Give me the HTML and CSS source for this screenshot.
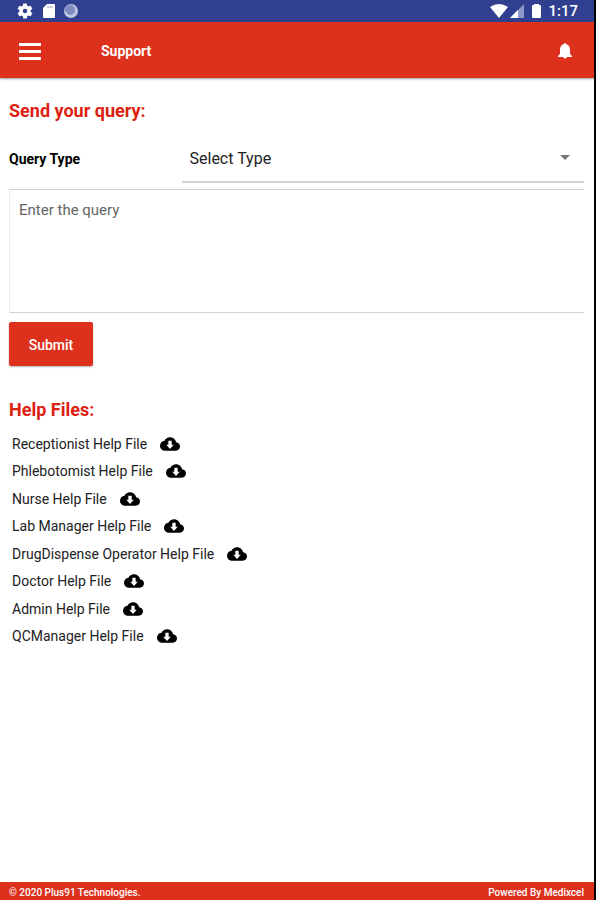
FILE: index.html
```
<!DOCTYPE html>
<html lang="en">
<head>
    <meta charset="UTF-8">
    <meta name="viewport" content="width=device-width, initial-scale=1.0">
    <title>Support</title>
    <link rel="stylesheet" href="styles.css">
</head>
<body>
    <!-- shared download icon -->
    <svg class="sprite" aria-hidden="true">
        <symbol id="cloud" viewBox="0 4 24 16">
            <path fill-rule="evenodd" d="M19.35 10.04C18.67 6.59 15.64 4 12 4 9.11 4 6.6 5.64 5.35 8.04 2.34 8.36 0 10.91 0 14c0 3.31 2.69 6 6 6h13c2.76 0 5-2.24 5-5 0-2.64-2.05-4.78-4.65-4.96zM16.500 13l-4.500 5-4.500-5H10V8h4v5z"/>
        </symbol>
    </svg>

    <div class="status">
        <div class="status-left">
            <svg width="18" height="18" viewBox="0 0 24 24" fill="#fff"><path d="M19.43 12.98c.04-.32.07-.64.07-.98s-.03-.66-.07-.98l2.11-1.65c.19-.15.24-.42.12-.64l-2-3.46c-.12-.22-.39-.3-.61-.22l-2.49 1c-.52-.4-1.08-.73-1.69-.98l-.38-2.65C14.46 2.18 14.25 2 14 2h-4c-.25 0-.46.18-.49.42l-.38 2.65c-.61.25-1.17.59-1.69.98l-2.49-1c-.23-.09-.49 0-.61.22l-2 3.46c-.13.22-.07.49.12.64l2.11 1.65c-.04.32-.07.65-.07.98s.03.66.07.98l-2.11 1.65c-.19.15-.24.42-.12.64l2 3.46c.12.22.39.3.61.22l2.49-1c.52.4 1.08.73 1.69.98l.38 2.65c.03.24.24.42.49.42h4c.25 0 .46-.18.49-.42l.38-2.65c.61-.25 1.17-.59 1.69-.98l2.49 1c.23.09.49 0 .61-.22l2-3.46c.12-.22.07-.49-.12-.64l-2.11-1.65zM12 15a3 3 0 1 1 0-6 3 3 0 0 1 0 6z"/></svg>
            <svg width="12" height="14" viewBox="0 0 12 14"><path fill="#fff" d="M4 0h7q1 0 1 1v12q0 1-1 1H1q-1 0-1-1V4z"/><path stroke="#9aa2cf" d="M5 2v2M7 2v2M9 2v2"/></svg>
            <svg width="14" height="14" viewBox="0 0 14 14"><circle cx="7" cy="7" r="7" fill="#bcc2e0"/><circle cx="6" cy="6" r="5" fill="#7f8ac1"/><path d="M2 8a4 4 0 0 0 5 4" fill="none" stroke="#d5d9ee"/></svg>
        </div>
        <div class="status-right">
            <svg width="18" height="14" viewBox="0 0 18 14" fill="#fff"><path d="M0 3q9-6 18 0L9 14z"/></svg>
            <svg width="14" height="14" viewBox="0 0 14 14"><path fill="#8d97c8" d="M14 0v14H0z"/><path fill="#fff" d="M8 6v8H0z"/></svg>
            <svg class="battery" width="9" height="14" viewBox="0 0 9 14" fill="#fff"><path d="M2 0h5v1h1q1 0 1 1v11q0 1-1 1H1q-1 0-1-1V2q0-1 1-1h1z"/></svg>
            <span>1:17</span>
        </div>
    </div>

    <header class="toolbar">
        <button class="icon-btn" type="button" aria-label="Menu">
            <svg width="22" height="17" viewBox="0 0 22 17" fill="#fff"><path d="M0 0h22v3H0zM0 7h22v3H0zM0 14h22v3H0z"/></svg>
        </button>
        <h1>Support</h1>
        <button class="icon-btn" type="button" aria-label="Notifications">
            <svg width="14" height="16" viewBox="0 0 14 16" fill="#fff"><path d="M7 0q1 0 1 1 4 1 4 6v4l2 2v1H0v-1l2-2V7q0-5 4-6 0-1 1-1zM5 14h4q-2 3-4 0z"/></svg>
        </button>
    </header>

    <main>
        <form>
            <h2>Send your query:</h2>
            <div class="row">
                <label for="type">Query Type</label>
                <div class="select-box">
                    <select id="type">
                        <option>Select Type</option>
                    </select>
                    <svg class="arrow" width="10" height="5" viewBox="0 0 10 5" fill="#757575"><path d="M0 0h10L5 5z"/></svg>
                </div>
            </div>
            <textarea placeholder="Enter the query" aria-label="Enter the query"></textarea>
            <button class="submit" type="submit">Submit</button>
        </form>

        <h2>Help Files:</h2>
        <ul class="files">
            <li><a href="#">Receptionist Help File <svg class="cloud"><use href="#cloud"/></svg></a></li>
            <li><a href="#">Phlebotomist Help File <svg class="cloud"><use href="#cloud"/></svg></a></li>
            <li><a href="#">Nurse Help File <svg class="cloud"><use href="#cloud"/></svg></a></li>
            <li><a href="#">Lab Manager Help File <svg class="cloud"><use href="#cloud"/></svg></a></li>
            <li><a href="#">DrugDispense Operator Help File <svg class="cloud"><use href="#cloud"/></svg></a></li>
            <li><a href="#">Doctor Help File <svg class="cloud"><use href="#cloud"/></svg></a></li>
            <li><a href="#">Admin Help File <svg class="cloud"><use href="#cloud"/></svg></a></li>
            <li><a href="#">QCManager Help File <svg class="cloud"><use href="#cloud"/></svg></a></li>
        </ul>
    </main>

    <footer>
        <span>© 2020 Plus91 Technologies.</span>
        <span>Powered By Medixcel</span>
    </footer>
</body>
</html>
```
FILE: styles.css
```
* {
    box-sizing: border-box;
    margin: 0;
    padding: 0;
}

body {
    display: flex;
    flex-direction: column;
    min-height: 100vh;
    border-right: 2px solid #000;
    background: #fff;
    color: #111;
    font-family: Roboto, "Liberation Sans", sans-serif;
    font-size: 14px;
}

svg {
    display: block;
    flex: none;
}

.sprite {
    position: absolute;
    width: 0;
    height: 0;
}

.status {
    display: flex;
    justify-content: space-between;
    height: 22px;
    padding: 0 16px;
    background: #303f8f;
    color: #fff;
    font-size: 15px;
    font-weight: 500;
}

.status-left, .status-right {
    display: flex;
    align-items: center;
}

.status-left {
    gap: 9px;
}

.status-right {
    gap: 2px;
}

.battery {
    margin: 0 5px 0 6px;
}

.toolbar {
    display: flex;
    align-items: center;
    height: 56px;
    padding: 2px 22px 0 19px;
    background: #dd301d;
    box-shadow: 0 1px 2px rgba(0, 0, 0, 0.4);
    color: #fff;
}

.toolbar h1 {
    flex: 1;
    margin-left: 60px;
    font-size: 14px;
    font-weight: 700;
}

.icon-btn {
    border: 0;
    background: none;
}

main {
    flex: 1;
    padding: 22px 10px 0 9px;
}

h2 {
    color: #dd1f12;
    font-size: 18px;
    font-weight: 700;
    line-height: 22px;
}

.row {
    display: flex;
    align-items: center;
    margin: 12px 0 6px;
}

.row label {
    width: 30%;
    color: #000;
    font-weight: 700;
}

.select-box {
    position: relative;
    flex: 1;
}

select {
    display: block;
    width: 100%;
    height: 49px;
    padding: 2px 8px 0;
    appearance: none;
    border: 0;
    border-bottom: 2px solid #d2d2d2;
    background: none;
    color: #222;
    font: inherit;
    font-size: 16px;
}

.arrow {
    position: absolute;
    top: 21px;
    right: 14px;
    pointer-events: none;
}

textarea {
    display: block;
    width: 100%;
    height: 124px;
    padding: 11px 9px;
    border: 1px solid #d2d2d2;
    border-left-color: #eee;
    border-right: 0;
    resize: none;
    font: inherit;
    font-size: 15px;
    line-height: 18px;
}

textarea::placeholder {
    color: #666;
}

.submit {
    width: 84px;
    height: 44px;
    margin: 9px 0 33px;
    padding-top: 2px;
    border: 0;
    border-radius: 2px;
    background: #dd301d;
    box-shadow: 0 1px 2px rgba(0, 0, 0, 0.3);
    color: #fff;
    font: inherit;
    font-weight: 500;
}

/* eight rows share the height evenly */
.files {
    display: grid;
    grid-auto-rows: 1fr;
    height: 220px;
    margin: 9px 0 0 3px;
    list-style: none;
}

.files li, .files a {
    display: flex;
    align-items: center;
}

.files a {
    gap: 13px;
    color: #222;
    text-decoration: none;
}

.cloud {
    width: 20px;
    height: 14px;
    fill: #000;
}

footer {
    display: flex;
    justify-content: space-between;
    height: 18px;
    padding: 2px 10px 0 9px;
    background: #dd301d;
    color: #fff;
    font-size: 10px;
    font-weight: 500;
    line-height: 17px;
}
```
